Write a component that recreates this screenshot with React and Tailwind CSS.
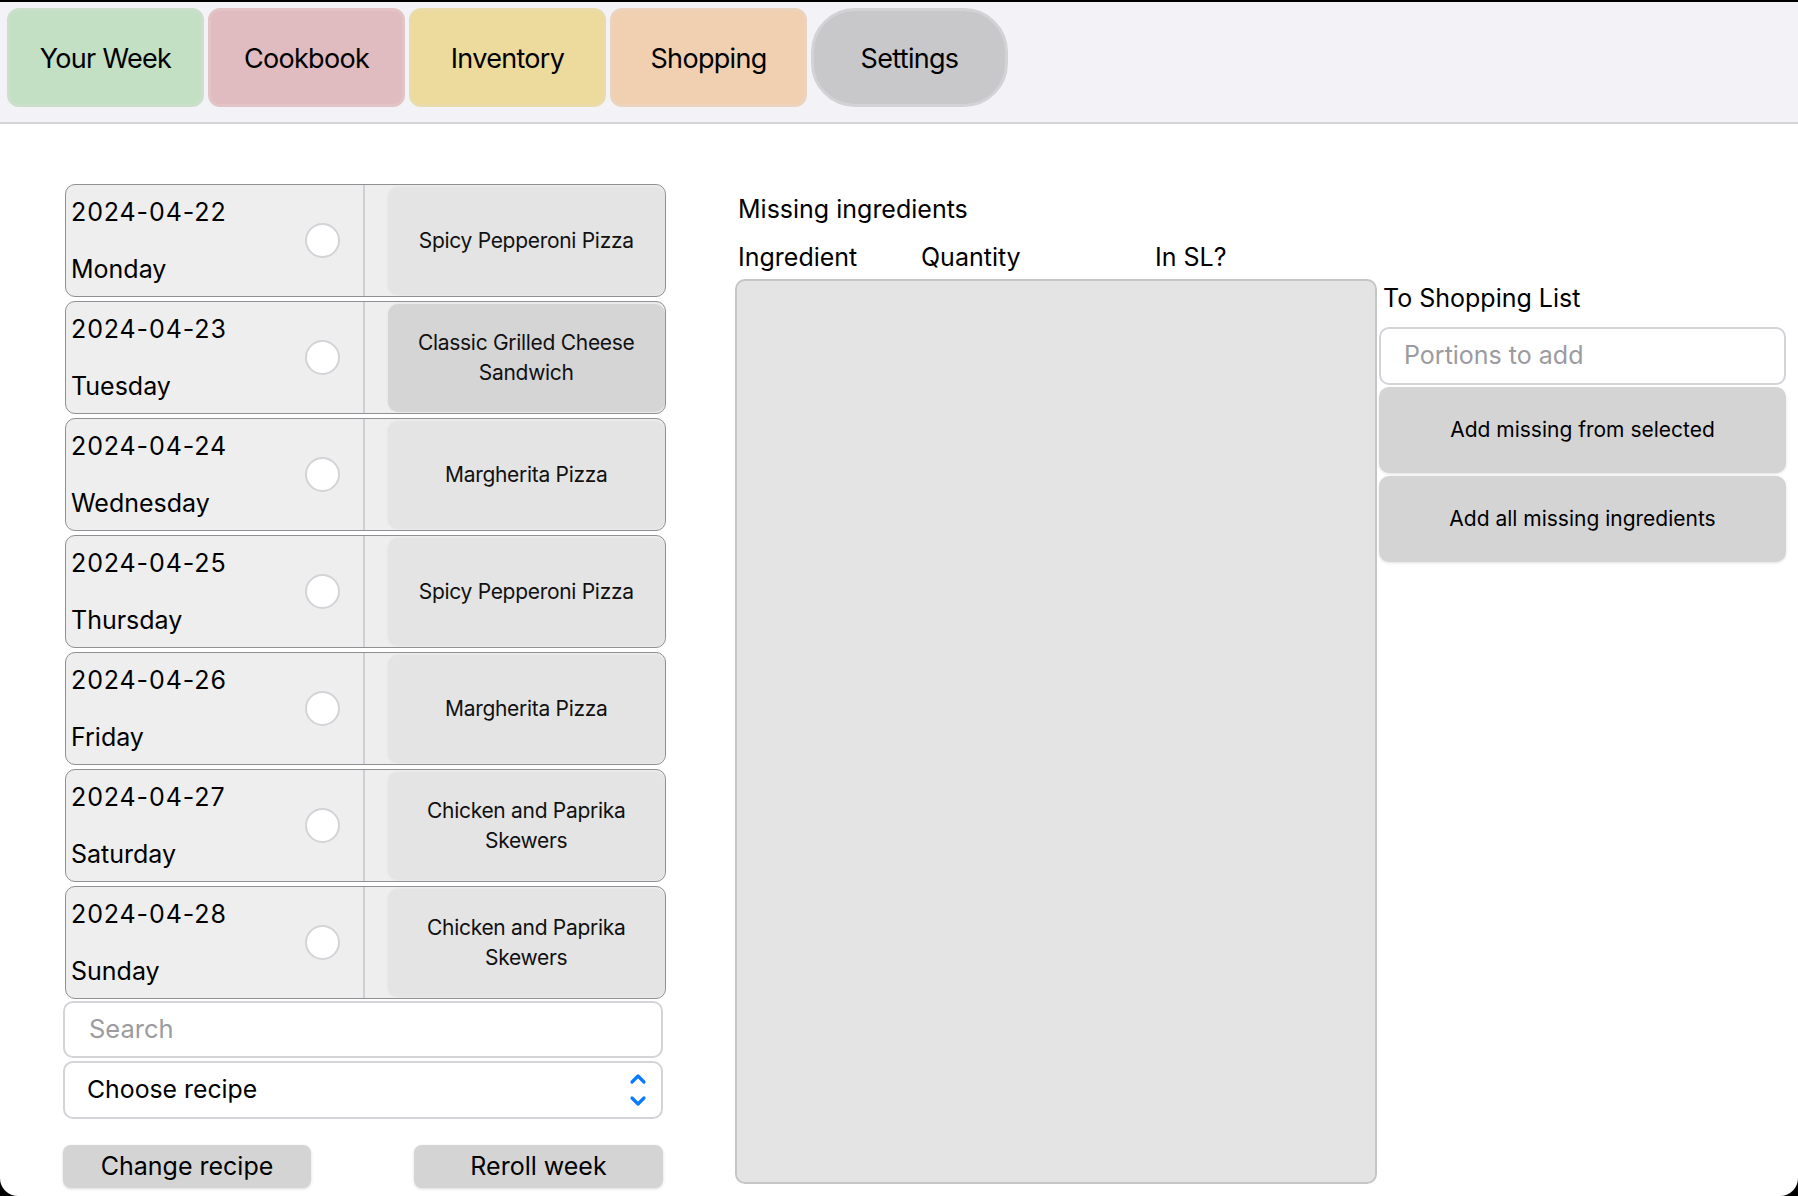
import React from "react";

const tabs = [
  { label: "Your Week", cls: "bg-[#c3dfc4] border-[#cbdfcb] rounded-[12px]" },
  { label: "Cookbook", cls: "bg-[#e0bbbf] border-[#e2c3c6] rounded-[12px]" },
  { label: "Inventory", cls: "bg-[#ecdb9c] border-[#e9dcaa] rounded-[12px]" },
  { label: "Shopping", cls: "bg-[#f0d0b1] border-[#ecd3bd] rounded-[12px]" },
  { label: "Settings", cls: "bg-[#c8c8cb] border-[#d3d3d6] rounded-[44px]" },
];

const days = [
  { date: "2024-04-22", day: "Monday", recipe: "Spicy Pepperoni Pizza", sel: false },
  { date: "2024-04-23", day: "Tuesday", recipe: "Classic Grilled Cheese Sandwich", sel: true },
  { date: "2024-04-24", day: "Wednesday", recipe: "Margherita Pizza", sel: false },
  { date: "2024-04-25", day: "Thursday", recipe: "Spicy Pepperoni Pizza", sel: false },
  { date: "2024-04-26", day: "Friday", recipe: "Margherita Pizza", sel: false },
  { date: "2024-04-27", day: "Saturday", recipe: "Chicken and Paprika Skewers", sel: false },
  { date: "2024-04-28", day: "Sunday", recipe: "Chicken and Paprika Skewers", sel: false },
];

function DayRow({ d }) {
  return (
    <div className="flex h-[113px] w-[601px] ml-[2px] rounded-[10px] border-[1.5px] border-[#8f8f94] bg-[#eeeeee] overflow-hidden">
      <div className="relative w-[297px] h-full">
        <div className="absolute left-[5px] top-[12px] text-[25px] leading-[30px] tracking-[0.9px] text-black">{d.date}</div>
        <div className="absolute left-[5px] top-[69px] text-[25px] leading-[30px] text-black">{d.day}</div>
        <div className="absolute left-[239px] top-[38px] w-[35px] h-[35px] rounded-full bg-white border-[2.5px] border-[#d3d3d8]" />
      </div>
      <div className="w-[1.5px] h-full bg-[#d0d0d4]" />
      <div className="flex-1 pl-[23px] pt-[2px] pb-[1px]">
        <div
          className={
            "h-full rounded-[10px] flex items-center justify-center text-center px-2 text-[21px] leading-[30px] tracking-[-0.3px] text-[#111] shadow-[0_0_3px_rgba(0,0,0,0.06)] " +
            (d.sel ? "bg-[#d5d5d5]" : "bg-[#e4e4e4]")
          }
        >
          <span className="max-w-[244px]">{d.recipe}</span>
        </div>
      </div>
    </div>
  );
}

export default function App() {
  return (
    <div className="w-[1798px] h-[1196px] bg-black pt-[2px] font-['Inter',sans-serif]">
      <div className="w-full h-[1194px] bg-white rounded-b-[18px] overflow-hidden">
        <header className="h-[122px] bg-[#f2f2f7] border-b-2 border-[#d6d6da] flex gap-[4px] pl-[7px] pt-[6px]">
          {tabs.map((t) => (
            <div
              key={t.label}
              className={
                "w-[197px] h-[99px] border-[3px] flex items-center justify-center pt-[4px] text-[27px] tracking-[-0.7px] text-black " +
                t.cls
              }
            >
              {t.label}
            </div>
          ))}
        </header>

        <div className="flex">
          <div className="ml-[63px] w-[604px] pt-[60px] flex flex-col">
            <div className="flex flex-col gap-[4px]">
              {days.map((d) => (
                <DayRow key={d.date} d={d} />
              ))}
            </div>
            <div className="mt-[2px] w-[600px] h-[57px] rounded-[10px] border-2 border-[#d3d3d8] bg-white flex items-center pl-[24px] text-[25.5px] text-[#9b9ba0]">
              Search
            </div>
            <div className="mt-[3px] w-[600px] h-[58px] rounded-[10px] border-2 border-[#d3d3d8] bg-white flex items-center pl-[22px] pr-[14px] text-[24.8px] text-black">
              <span className="flex-1">Choose recipe</span>
              <svg width="18" height="38" viewBox="0 0 18 38" fill="none">
                <path d="M3 11 L9 5 L15 11" stroke="#0a7aff" strokeWidth="3.2" strokeLinecap="round" strokeLinejoin="round" />
                <path d="M3 27 L9 33 L15 27" stroke="#0a7aff" strokeWidth="3.2" strokeLinecap="round" strokeLinejoin="round" />
              </svg>
            </div>
            <div className="mt-[26px] w-[600px] flex justify-between">
              <div className="w-[248px] h-[43px] rounded-[8px] bg-[#d4d4d4] shadow-[0_1px_3px_rgba(0,0,0,0.15)] flex items-center justify-center text-[25px] text-black">
                Change recipe
              </div>
              <div className="w-[249px] h-[43px] rounded-[8px] bg-[#d4d4d4] shadow-[0_1px_3px_rgba(0,0,0,0.15)] flex items-center justify-center text-[25px] text-black">
                Reroll week
              </div>
            </div>
          </div>

          <div className="ml-[68px] pt-[70px] flex flex-col">
            <div className="pl-[3px] text-[25px] leading-[30px] text-black">Missing ingredients</div>
            <div className="mt-[18px] pl-[3px] flex text-[25px] leading-[30px] text-black">
              <span className="w-[183px]">Ingredient</span>
              <span className="w-[234px]">Quantity</span>
              <span>In SL?</span>
            </div>
            <div className="mt-[7px] flex">
              <div className="w-[642px] h-[905px] rounded-[10px] bg-[#e4e4e4] border-2 border-[#c6c6c6]" />
              <div className="ml-[2px] w-[407px] flex flex-col">
                <div className="mt-[4px] pl-[4px] text-[25px] leading-[30px] text-black">To Shopping List</div>
                <div className="mt-[14px] h-[58px] rounded-[10px] border-2 border-[#d3d3d8] bg-white flex items-center pl-[23px] text-[25px] text-[#9b9ba0]">
                  Portions to add
                </div>
                <div className="mt-[2px] h-[86px] rounded-[10px] bg-[#d4d4d4] shadow-[0_1px_3px_rgba(0,0,0,0.12)] flex items-center justify-center text-[21px] text-black">
                  Add missing from selected
                </div>
                <div className="mt-[3px] h-[86px] rounded-[10px] bg-[#d4d4d4] shadow-[0_1px_3px_rgba(0,0,0,0.12)] flex items-center justify-center text-[21px] text-black">
                  Add all missing ingredients
                </div>
              </div>
            </div>
          </div>
        </div>
      </div>
    </div>
  );
}
